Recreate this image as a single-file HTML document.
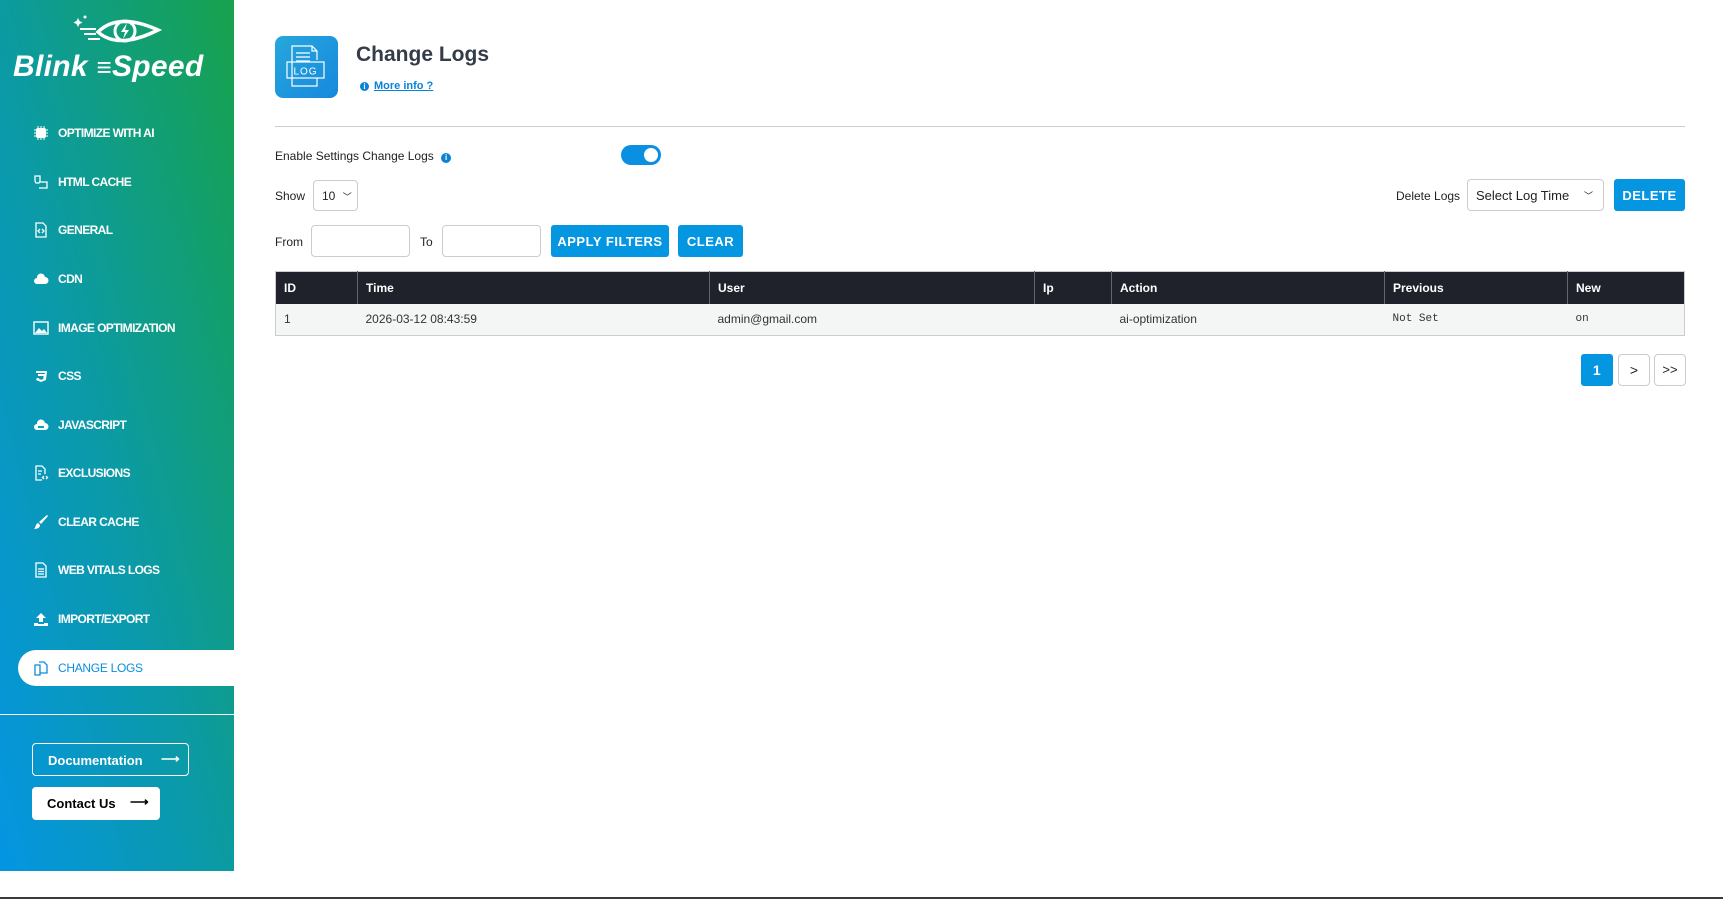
<!DOCTYPE html>
<html><head><meta charset="utf-8"><style>
*{box-sizing:border-box;margin:0;padding:0}
body{width:1723px;height:899px;background:#fff;font-family:"Liberation Sans",sans-serif;position:relative;overflow:hidden;color:#222}
.sb{position:absolute;left:0;top:0;width:234px;height:871px;background:linear-gradient(to top right,#0495e3 0%,#0b9aa8 45%,#17a24c 100%)}
.mi{position:absolute;left:33px;height:20px;display:flex;align-items:center;color:#fff;font-weight:bold;font-size:12px;letter-spacing:-0.6px}
.mi svg{width:16px;height:16px;margin-right:9px}
.act{position:absolute;left:18px;top:650px;width:216px;height:36px;background:#fff;border-radius:18px 0 0 18px}
.abs{position:absolute}
.btn{position:absolute;background:#0596e2;color:#fff;font-weight:bold;font-size:13px;border-radius:3px;display:flex;align-items:center;justify-content:center;letter-spacing:.5px}
.inp{position:absolute;border:1px solid #ccc;border-radius:4px;background:#fff}
.lbl{position:absolute;font-size:12px;color:#222}
th,td{text-align:left;padding-left:8px;font-size:12px}
</style></head><body>
<div class="sb">
 <svg class="abs" style="left:70px;top:12px" width="92" height="38" viewBox="0 0 92 38"><path d="M8 6l1.5 3 3 1.5-3 1.5L8 15l-1.5-3-3-1.5 3-1.5z" fill="#fff"/><circle cx="15" cy="5" r="1.5" fill="#fff"/><path d="M28 20 Q48 0 88 18 Q48 38 28 20Z" fill="none" stroke="#fff" stroke-width="3.5"/><circle cx="55" cy="19" r="10" fill="none" stroke="#fff" stroke-width="3"/><path d="M57 11l-6 9h4l-2 7 6-9h-4z" fill="#fff"/><path d="M10 17h16M14 22h12M18 27h12" stroke="#fff" stroke-width="2"/></svg>
 <div class="abs" style="left:13px;top:50px;color:#fff;font-weight:bold;font-style:italic;font-size:30px;letter-spacing:0.3px;white-space:nowrap">Blink <span style="font-size:26px">≡</span>Speed</div>
 <div class="mi" style="top:123px"><svg viewBox="0 0 16 16"><rect x="3" y="3" width="10" height="10" rx="2" fill="#fff"/><path d="M1 5h2M1 8h2M1 11h2M13 5h2M13 8h2M13 11h2M5 1v2M8 1v2M11 1v2M5 13v2M8 13v2M11 13v2" stroke="#fff"/></svg>OPTIMIZE WITH AI</div>
 <div class="mi" style="top:172px"><svg viewBox="0 0 16 16" fill="none" stroke="#fff" stroke-width="1.3"><path d="M2 2h5v5l-1 2H3L2 7z M6 8h8v6H6"/></svg>HTML CACHE</div>
 <div class="mi" style="top:220px"><svg viewBox="0 0 16 16" fill="none" stroke="#fff" stroke-width="1.3"><path d="M3 1h7l3 3v11H3z M7 7l-2 2 2 2M9 7l2 2-2 2"/></svg>GENERAL</div>
 <div class="mi" style="top:269px"><svg viewBox="0 0 16 16"><path d="M4 13a3 3 0 010-6 4 4 0 018-1 3.5 3.5 0 010 7z" fill="#fff"/></svg>CDN</div>
 <div class="mi" style="top:318px"><svg viewBox="0 0 16 16"><rect x="1" y="2" width="14" height="12" fill="none" stroke="#fff" stroke-width="1.4"/><path d="M2 13l4-5 3 3 2-2 3 4z" fill="#fff"/></svg>IMAGE OPTIMIZATION</div>
 <div class="mi" style="top:366px"><svg viewBox="0 0 16 16"><path d="M3 3h11l-1 9-5 2-5-2 1-2h2l-.2 1 2.2 .8 2.3-.8.3-3H5V6h7V5H3z" fill="#fff"/></svg>CSS</div>
 <div class="mi" style="top:415px"><svg viewBox="0 0 16 16"><path d="M4 13a3 3 0 010-6 4 4 0 018-1 3.5 3.5 0 010 7z" fill="#fff"/><path d="M5 10h6" stroke="#0aa" stroke-width="2"/></svg>JAVASCRIPT</div>
 <div class="mi" style="top:463px"><svg viewBox="0 0 16 16" fill="none" stroke="#fff" stroke-width="1.3"><path d="M9 15H3V1h6l3 3v5M5 6h4M5 9h3M11 11l-1.5 1.5L11 14M13 11l1.5 1.5L13 14"/></svg>EXCLUSIONS</div>
 <div class="mi" style="top:512px"><svg viewBox="0 0 16 16"><path d="M14 1l1 1-7 8-2-2z M5 9l2 2c0 3-3 4-6 4 2-1 1-5 4-6z" fill="#fff"/></svg>CLEAR CACHE</div>
 <div class="mi" style="top:560px"><svg viewBox="0 0 16 16" fill="none" stroke="#fff" stroke-width="1.3"><path d="M3 1h7l3 3v11H3z M5 7h6M5 9.5h6M5 12h6"/></svg>WEB VITALS LOGS</div>
 <div class="mi" style="top:609px"><svg viewBox="0 0 16 16"><path d="M8 2l5 5h-3v4H6V7H3z M1 12h4v1h6v-1h4v3H1z" fill="#fff"/></svg>IMPORT/EXPORT</div>
 <div class="act"></div>
 <div class="mi" style="top:658px;color:#0a8de0;font-weight:normal;letter-spacing:-0.3px"><svg viewBox="0 0 16 16" fill="none" stroke="#0a8de0" stroke-width="1.3"><path d="M2 5h5v10H2z M6 2h5l3 3v8H7"/></svg>CHANGE LOGS</div>
 <div class="abs" style="left:0;top:714px;width:234px;height:1px;background:#fff"></div>
 <div class="abs" style="left:32px;top:743px;width:157px;height:33px;border:1px solid #fff;border-radius:4px;color:#fff;font-weight:bold;font-size:13px;padding:9px 0 0 15px">Documentation<span style="position:absolute;left:128px;top:7px;font-size:13px">⟶</span></div>
 <div class="abs" style="left:32px;top:787px;width:128px;height:33px;background:#fff;border-radius:4px;color:#000;font-weight:bold;font-size:13px;padding:9px 0 0 15px">Contact Us<span style="position:absolute;left:98px;top:7px;font-size:13px">⟶</span></div>
</div>
<div class="abs" style="left:0;top:897px;width:1723px;height:2px;background:#3a3a3a"></div>

<div class="abs" style="left:275px;top:36px;width:63px;height:62px;border-radius:8px;background:linear-gradient(135deg,#27a7dc,#1688de)">
<svg width="63" height="62" viewBox="0 0 63 62" fill="none" stroke="#fff" stroke-width="1.2"><path d="M17 42V10h20l5 5v9M37 10v5h5M21 17h14M21 21h14M21 25h14M17 42v8h25v-8"/><rect x="12" y="26" width="37" height="16"/><text x="30.5" y="38.5" fill="#fff" stroke="none" font-family="Liberation Sans" font-size="10" text-anchor="middle" letter-spacing="1">LOG</text></svg></div>
<div class="abs" style="left:356px;top:43px;font-size:21px;font-weight:bold;color:#333c48">Change Logs</div>
<div class="abs" style="left:360px;top:80px;font-size:11px;font-weight:bold;color:#0a82d6"><span style="display:inline-block;width:9px;height:9px;border-radius:50%;background:#0a82d6;color:#fff;font-size:8px;text-align:center;line-height:9px;margin-right:5px">i</span><u>More info ?</u></div>
<div class="abs" style="left:275px;top:126px;width:1410px;height:1px;background:#ccc"></div>

<div class="lbl" style="left:275px;top:149px">Enable Settings Change Logs <span style="display:inline-block;width:10px;height:10px;border-radius:50%;background:#0a82d6;color:#fff;font-size:8px;text-align:center;line-height:10px;margin-left:4px;font-weight:bold">i</span></div>
<div class="abs" style="left:621px;top:145px;width:40px;height:20px;border-radius:10px;background:#0b8fe0"><div class="abs" style="left:23px;top:3px;width:14px;height:14px;border-radius:50%;background:#fff"></div></div>

<div class="lbl" style="left:275px;top:189px">Show</div>
<div class="inp" style="left:313px;top:180px;width:45px;height:31px;font-size:12px;padding:8px 0 0 8px">10 <span style="font-size:9px;margin-left:4px">﹀</span></div>
<div class="lbl" style="left:1396px;top:189px">Delete Logs</div>
<div class="inp" style="left:1467px;top:179px;width:137px;height:32px;font-size:13px;padding:8px 0 0 8px">Select Log Time <span style="position:absolute;right:10px;top:9px;font-size:9px">﹀</span></div>
<div class="btn" style="left:1614px;top:179px;width:71px;height:32px">DELETE</div>

<div class="lbl" style="left:275px;top:235px">From</div>
<div class="inp" style="left:311px;top:225px;width:99px;height:32px"></div>
<div class="lbl" style="left:420px;top:235px">To</div>
<div class="inp" style="left:442px;top:225px;width:99px;height:32px"></div>
<div class="btn" style="left:551px;top:225px;width:118px;height:32px">APPLY FILTERS</div>
<div class="btn" style="left:678px;top:225px;width:65px;height:32px">CLEAR</div>

<table class="abs" style="left:275px;top:271px;width:1410px;border-collapse:collapse;border:1px solid #ccc">
<tr style="background:#1f222a;color:#fff;height:32px"><th style="width:82px">ID</th><th style="width:352px;border-left:1px solid #666">Time</th><th style="width:325px;border-left:1px solid #666">User</th><th style="width:77px;border-left:1px solid #666">Ip</th><th style="width:273px;border-left:1px solid #666">Action</th><th style="width:183px;border-left:1px solid #666">Previous</th><th style="border-left:1px solid #666">New</th></tr>
<tr style="background:#f4f5f5;color:#333;height:32px"><td>1</td><td>2026-03-12 08:43:59</td><td>admin@gmail.com</td><td></td><td>ai-optimization</td><td style="font-family:'Liberation Mono',monospace;font-size:11px">Not Set</td><td style="font-family:'Liberation Mono',monospace;font-size:11px">on</td></tr>
</table>

<div class="btn" style="left:1581px;top:354px;width:32px;height:32px;font-size:14px">1</div>
<div class="inp" style="left:1618px;top:354px;width:32px;height:32px;text-align:center;line-height:30px;font-size:14px">&gt;</div>
<div class="inp" style="left:1654px;top:354px;width:32px;height:32px;text-align:center;line-height:30px;font-size:13px">&gt;&gt;</div>
</body></html>
